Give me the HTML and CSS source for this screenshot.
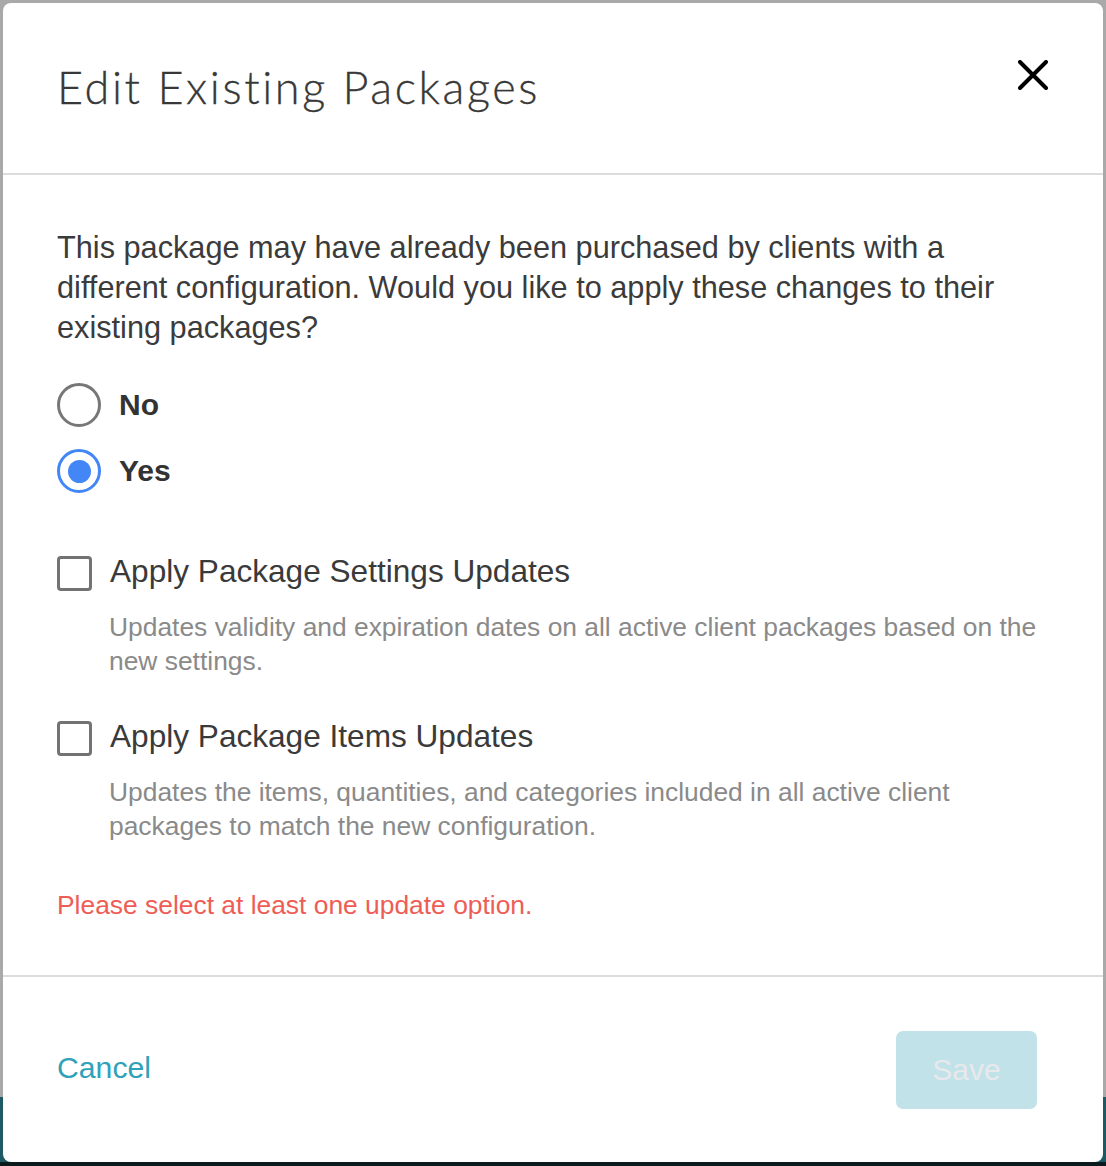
FILE: index.html
```html
<!DOCTYPE html>
<html lang="en">
<head>
<meta charset="utf-8">
<title>Edit Existing Packages</title>
<link rel="stylesheet" href="styles.css">
</head>
<body>
<div class="backdrop">
  <div class="modal" role="dialog" aria-labelledby="modal-title">
    <header class="modal-header">
      <h1 id="modal-title" class="modal-title">Edit Existing Packages</h1>
      <button class="close-btn" aria-label="Close">
        <svg viewBox="0 0 30 30" width="30" height="30" aria-hidden="true">
          <path d="M2 2 L28 28 M28 2 L2 28" stroke="#000" stroke-width="4" stroke-linecap="round" fill="none"/>
        </svg>
      </button>
    </header>
    <section class="modal-body">
      <p class="intro">This package may have already been purchased by clients with a different configuration. Would you like to apply these changes to their existing packages?</p>
      <div class="radio-group">
        <label class="radio-row">
          <span class="radio"></span>
          <span class="radio-label">No</span>
        </label>
        <label class="radio-row">
          <span class="radio radio-checked"><span class="radio-dot"></span></span>
          <span class="radio-label">Yes</span>
        </label>
      </div>
      <div class="option">
        <label class="check-row">
          <span class="checkbox"></span>
          <span class="check-label">Apply Package Settings Updates</span>
        </label>
        <p class="option-desc">Updates validity and expiration dates on all active client packages based on the new settings.</p>
      </div>
      <div class="option">
        <label class="check-row">
          <span class="checkbox"></span>
          <span class="check-label">Apply Package Items Updates</span>
        </label>
        <p class="option-desc">Updates the items, quantities, and categories included in all active client packages to match the new configuration.</p>
      </div>
      <p class="error">Please select at least one update option.</p>
    </section>
    <footer class="modal-footer">
      <a class="cancel-link" href="#">Cancel</a>
      <button class="save-btn" disabled>Save</button>
    </footer>
  </div>
</div>
</body>
</html>
```
FILE: styles.css
```css
* { box-sizing: border-box; }
html, body { margin: 0; padding: 0; }
body {
  width: 1106px;
  height: 1166px;
  overflow: hidden;
  font-family: "Liberation Sans", Arial, sans-serif;
  background: linear-gradient(to bottom, #a9a9a9 0, #a9a9a9 1097px, #1e5a63 1097px, #1e5a63 1162px, #0b1a1c 1162px);
}
.backdrop {
  padding: 3px;
}
.modal {
  width: 1100px;
  height: 1159px;
  background: #fff;
  border-radius: 8px;
  display: flex;
  flex-direction: column;
}
.modal-header {
  height: 172px;
  border-bottom: 2px solid #dcdcdc;
  display: flex;
  justify-content: space-between;
  align-items: flex-start;
  padding: 0 55px 0 54px;
}
.modal-title {
  margin: 54px 0 0 0;
  font-family: Lato, "Open Sans", sans-serif;
  font-weight: 300;
  font-size: 45px;
  line-height: 60px;
  color: #383838;
  letter-spacing: 2.6px;
  -webkit-text-stroke: 0.3px #383838;
}
.close-btn {
  margin-top: 57px;
  padding: 0;
  border: 0;
  background: none;
  width: 30px;
  height: 30px;
  cursor: pointer;
}
.close-btn svg { display: block; }
.modal-body {
  flex: 1;
  padding: 53px 54px 0 54px;
}
.intro {
  margin: 0;
  font-size: 30.7px;
  line-height: 40px;
  color: #3b3b3b;
}
.radio-group {
  margin-top: 35px;
  display: flex;
  flex-direction: column;
  gap: 22px;
}
.radio-row {
  display: flex;
  align-items: center;
  height: 44px;
}
.radio {
  width: 44px;
  height: 44px;
  border: 3px solid #777;
  border-radius: 50%;
  display: flex;
  align-items: center;
  justify-content: center;
  flex: none;
}
.radio-checked { border-color: #4287f5; border-width: 3.5px; }
.radio-dot {
  width: 23px;
  height: 23px;
  border-radius: 50%;
  background: #4287f5;
}
.radio-label {
  margin-left: 18px;
  font-weight: 700;
  font-size: 30px;
  color: #333;
}
.option {
  margin-top: 63px;
}
.option + .option {
  margin-top: 43px;
}
.check-row {
  display: flex;
  align-items: center;
  height: 35px;
}
.checkbox {
  width: 35px;
  height: 35px;
  border: 3px solid #737373;
  border-radius: 4px;
  flex: none;
}
.check-label {
  margin-left: 18px;
  margin-bottom: 6px;
  font-size: 31.6px;
  color: #3a3a3a;
  line-height: 36px;
}
.option-desc {
  margin: 19px 0 0 52px;
  font-size: 26.4px;
  line-height: 34px;
  color: #8a8a8a;
}
.error {
  margin: 45px 0 0 0;
  font-size: 26.4px;
  line-height: 34px;
  color: #ee5d55;
}
.modal-footer {
  height: 187px;
  border-top: 2px solid #dcdcdc;
  display: flex;
  align-items: center;
  justify-content: space-between;
  padding: 0 66px 0 54px;
}
.cancel-link {
  margin-bottom: 4px;
  font-size: 30.2px;
  color: #2fa2ba;
  text-decoration: none;
}
.save-btn {
  width: 141px;
  height: 78px;
  border: 0;
  border-radius: 7px;
  background: #c1e2e9;
  color: #e7e9ea;
  font-family: "Liberation Sans", Arial, sans-serif;
  font-size: 30px;
}
```
